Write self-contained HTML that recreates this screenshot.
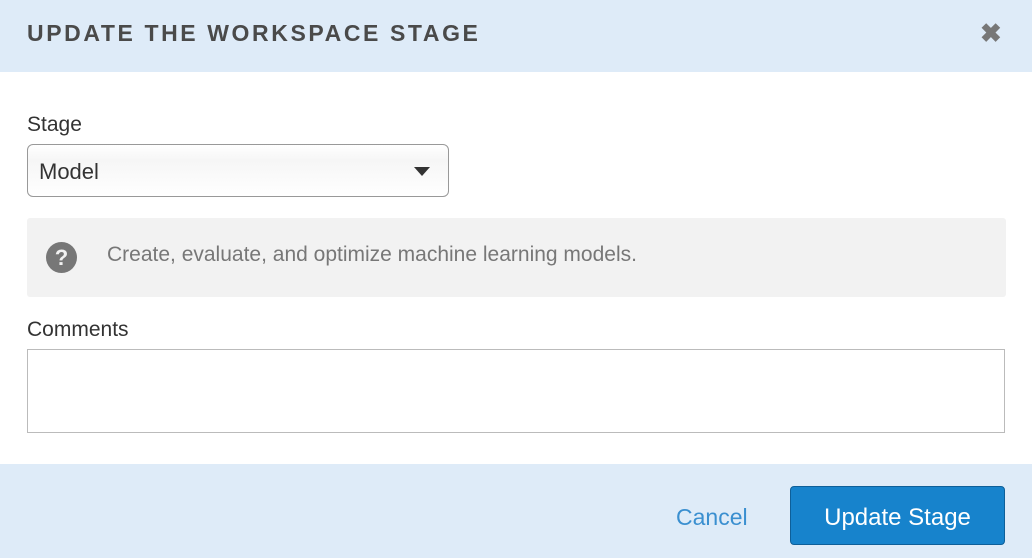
<!DOCTYPE html>
<html><head><style>
body{margin:0;width:1032px;height:558px;background:#fff;font-family:"Liberation Sans",sans-serif;position:relative;overflow:hidden}
.hdr{position:absolute;left:0;top:0;width:1032px;height:72px;background:#deebf8}
.title{position:absolute;left:27px;top:20px;font-size:23px;font-weight:bold;letter-spacing:2.6px;color:#4a4a4a}
.x{position:absolute;left:980px;top:18px;font-size:26px;font-weight:bold;color:#777}
.lbl{position:absolute;left:27px;font-size:21px;color:#333}
.sel{position:absolute;left:27px;top:144px;width:420px;height:51px;border:1px solid #999;border-radius:6px;background:linear-gradient(#fff,#f6f6f6 30%,#fff)}
.sel span{position:absolute;left:11px;top:14px;font-size:22px;color:#333}
.tri{position:absolute;right:18px;top:22px;width:0;height:0;border-left:8px solid transparent;border-right:8px solid transparent;border-top:9px solid #333}
.info{position:absolute;left:27px;top:218px;width:979px;height:79px;background:#f2f2f2;border-radius:3px}
.q{position:absolute;left:19px;top:24px;width:31px;height:31px;border-radius:50%;background:#777;color:#f2f2f2;font-weight:bold;font-size:22px;text-align:center;line-height:31px}
.info .t{position:absolute;left:80px;top:25px;font-size:21px;color:#777}
.ta{position:absolute;left:27px;top:349px;width:976px;height:82px;border:1px solid #bbb}
.ftr{position:absolute;left:0;top:464px;width:1032px;height:94px;background:#deebf8}
.cancel{position:absolute;left:676px;font-size:23px;color:#3a8fd0}
.btn{position:absolute;left:790px;width:213px;height:57px;background:#1783cc;border:1px solid #0e5f99;border-radius:4px;color:#fff;font-size:24px;text-align:center;line-height:61px}
</style></head><body>
<div class="hdr"><div class="title">UPDATE THE WORKSPACE STAGE</div><div class="x">✖</div></div>
<div class="lbl" style="top:113px">Stage</div>
<div class="sel"><span>Model</span><div class="tri"></div></div>
<div class="info"><div class="q">?</div><div class="t">Create, evaluate, and optimize machine learning models.</div></div>
<div class="lbl" style="top:318px">Comments</div>
<div class="ta"></div>
<div class="ftr"><div class="cancel" style="top:40px">Cancel</div><div class="btn" style="top:22px">Update Stage</div></div>
</body></html>
